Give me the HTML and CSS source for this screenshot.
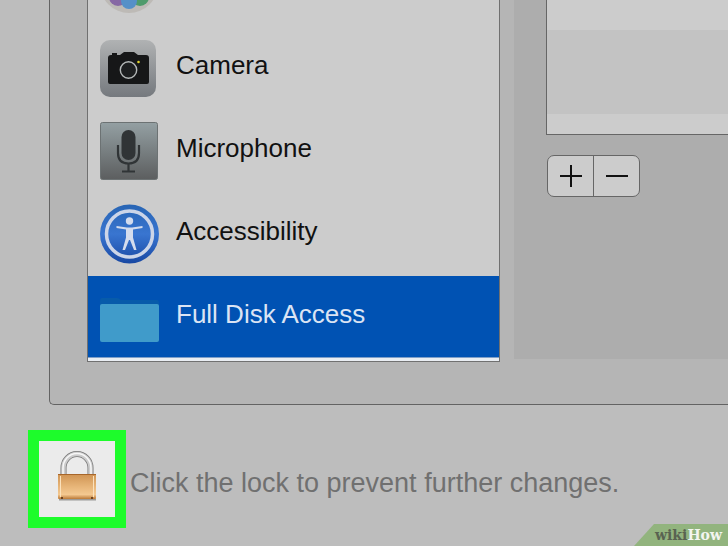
FILE: index.html
```html
<!DOCTYPE html>
<html lang="en">
<head>
<meta charset="utf-8">
<meta name="viewport" content="width=device-width, initial-scale=1">
<title>Security &amp; Privacy</title>
<link rel="stylesheet" href="styles.css">
</head>
<body>
<main class="panel">
  <ul class="services">
    <li class="service service-cut">
      <svg class="icon" viewBox="0 0 60 60" aria-hidden="true">
        <circle cx="29" cy="30" r="29" fill="#bdbab6"/>
        <circle cx="18" cy="43" r="9" fill="#8668a4"/>
        <circle cx="40" cy="43" r="9" fill="#4f9b6c"/>
        <circle cx="29" cy="47" r="8" fill="#5590c8"/>
      </svg>
    </li>
    <li class="service">
      <svg class="icon" viewBox="0 0 60 60" aria-hidden="true">
        <defs><linearGradient id="cam" x2="0" y2="1"><stop stop-color="#b0b2b3"/><stop offset="1" stop-color="#75797e"/></linearGradient></defs>
        <rect x="0" y="2" width="56" height="57" rx="10" fill="url(#cam)"/>
        <path d="M12 17v-2h5v2h3l4-3h10l4 3h8q3 0 3 3v24q0 2-2 2H10q-2 0-2-2V20q0-3 3-3z" fill="#161718"/>
        <circle cx="28.500" cy="32" r="8.200" fill="#1d1f20" stroke="#b4b8b8" stroke-width="1.400"/>
        <circle cx="38.500" cy="24" r="1.300" fill="#e0d32b"/>
      </svg>
      <button class="name" type="button">Camera</button>
    </li>
    <li class="service">
      <svg class="icon" viewBox="0 0 60 60" aria-hidden="true">
        <defs><linearGradient id="mic" x2="0" y2="1"><stop stop-color="#94a0a3"/><stop offset="1" stop-color="#5c5e5f"/></linearGradient></defs>
        <rect x="0.500" y="1.500" width="57" height="57" rx="2" fill="url(#mic)" stroke="#6c7273"/>
        <rect x="21.500" y="9" width="14" height="30" rx="7" fill="#303436"/>
        <path d="M18 24v8q0 10.500 10.500 10.500T39 32v-8M28.500 42.500v8M22 50.500h13" fill="none" stroke="#303436" stroke-width="2.200"/>
      </svg>
      <button class="name" type="button">Microphone</button>
    </li>
    <li class="service">
      <svg class="icon" viewBox="0 0 60 60" aria-hidden="true">
        <defs><linearGradient id="acc" x2="0" y2="1"><stop stop-color="#2865b4"/><stop offset=".5" stop-color="#3975d0"/><stop offset="1" stop-color="#1848a3"/></linearGradient></defs>
        <circle cx="29.500" cy="30" r="29.500" fill="url(#acc)"/>
        <circle cx="29.500" cy="30" r="23" fill="none" stroke="#ccd5e8" stroke-width="3.500"/>
        <circle cx="29.500" cy="17" r="3.700" fill="#d4dced"/>
        <path d="M16.500 22L27 23.500h5L42.500 22v2L33 25.500v8L36.500 46H34L30 36h-1l-4 10h-2.500L26 33.500v-8L16.500 24z" fill="#d4dced"/>
      </svg>
      <button class="name" type="button">Accessibility</button>
    </li>
    <li class="service selected">
      <svg class="icon" viewBox="0 0 60 60" aria-hidden="true">
        <path d="M0 14q0-3 2-3h15q2 0 4 2h36q2 0 2 3v9H0z" fill="#075baa"/>
        <rect x="0" y="17" width="59" height="38" rx="2" fill="#409bca"/>
      </svg>
      <button class="name" type="button" aria-current="true">Full Disk Access</button>
    </li>
  </ul>
  <section class="detail">
    <div class="apps"><div class="app"></div></div>
    <div class="actions">
      <button type="button" aria-label="Add"><svg viewBox="0 0 24 24"><path d="M1 12h22M12 1v22"/></svg></button>
      <button type="button" aria-label="Remove"><svg viewBox="0 0 24 24"><path d="M1 12h22"/></svg></button>
    </div>
  </section>
</main>
<footer class="lockbar">
  <button class="lock" id="lock" type="button" aria-labelledby="lock-text">
    <svg viewBox="0 0 44 52" aria-hidden="true">
      <defs>
        <linearGradient id="brass" x2="0" y2="1"><stop stop-color="#cf9352"/><stop offset=".5" stop-color="#e7b578"/><stop offset=".82" stop-color="#f4c890"/><stop offset="1" stop-color="#bb7936"/></linearGradient>
        <linearGradient id="steel"><stop stop-color="#777"/><stop offset=".25" stop-color="#ddd"/><stop offset=".75" stop-color="#d4d4d4"/><stop offset="1" stop-color="#666"/></linearGradient>
      </defs>
      <path d="M8.500 26V19a13.500 14 0 0 1 27 0v7" fill="none" stroke="#777" stroke-width="6"/>
      <path d="M8.500 26V19a13.500 14 0 0 1 27 0v7" fill="none" stroke="#ccc" stroke-width="4.500"/>
      <path d="M8 26V19a14 14.500 0 0 1 28 0v7" fill="none" stroke="#f7f7f7" stroke-width="1.500"/>
      <path d="M4 50.500h37" stroke="#9c9b99" stroke-width="2"/>
      <rect x="3" y="25" width="38" height="25" rx="1" fill="url(#brass)"/>
      <path d="M5.500 27v21M38.500 27v21" stroke="#fbe1bb"/>
      <path d="M3 25.500h38" stroke="#a7662a"/>
      <path d="M7 48v2M37 48v2" stroke="#70431d" stroke-width="2"/>
    </svg>
  </button>
  <label class="lock-text" id="lock-text" for="lock">Click the lock to prevent further changes.</label>
</footer>
<div class="brand"><span class="wiki">wiki</span><span>How</span></div>
</body>
</html>
```
FILE: styles.css
```css
* {
  box-sizing: border-box;
}

body {
  margin: 0;
  min-height: 100vh;
  overflow: hidden;
  background: #bdbdbd;
  color: #111;
  font-family: "Liberation Sans", Arial, sans-serif;
}

button {
  margin: 0;
  padding: 0;
  border: 0;
  background: none;
  color: inherit;
  font: inherit;
}

.panel {
  display: flex;
  gap: 14px;
  margin-left: 49px;
  padding: 0 0 42px 37px;
  border: solid #636363;
  border-width: 0 0 1px 1px;
  border-bottom-left-radius: 5px;
  background: #b5b5b5;
}

.services {
  flex: 0 0 413px;
  display: grid;
  gap: 2px;
  margin: 0;
  padding: 0 0 4px;
  list-style: none;
  border: solid #707070;
  border-width: 0 1px 1px;
  background: #ccc;
}

.service {
  display: flex;
  align-items: center;
  gap: 16px;
  height: 81px;
  padding-left: 12px;
}

.service-cut {
  height: 25px;
  align-items: flex-end;
  padding-bottom: 11px;
  overflow: hidden;
}

.icon {
  flex: none;
  width: 60px;
  height: 60px;
}

.name {
  padding-bottom: 6px;
  font-size: 26px;
  line-height: 32px;
}

.selected {
  background: #0052b3;
  color: #dbe4f4;
  box-shadow: 0 1px #7f9fc8, 0 4px #e9edf2;
}

.detail {
  flex: 1;
  margin-bottom: 3px;
  padding-left: 32px;
  background: #adadad;
}

.apps {
  height: 135px;
  padding-top: 30px;
  border: solid #666;
  border-width: 0 0 1px 1px;
  background: #ccc;
}

.app {
  height: 84px;
  background: #c3c3c3;
}

.actions {
  display: inline-flex;
  margin: 20px 0 0 1px;
  border: 1px solid #666;
  border-radius: 7px;
  background: #ccc;
}

.actions button {
  display: grid;
  place-items: center;
  width: 45px;
  height: 40px;
}

.actions button + button {
  width: 46px;
  border-left: 1px solid #666;
}

.actions svg {
  width: 24px;
  height: 24px;
  stroke: #111;
  stroke-width: 2;
}

.lockbar {
  display: flex;
  align-items: center;
  gap: 4px;
  padding: 25px 0 0 28px;
}

.lock {
  display: grid;
  justify-items: center;
  align-items: start;
  width: 98px;
  height: 98px;
  padding-top: 8px;
  border: 11px solid #1dfc2b;
  background: #ebebeb;
}

.lock svg {
  width: 44px;
  height: 52px;
}

.lock-text {
  padding-top: 8px;
  color: #707070;
  font-size: 27px;
  line-height: 32px;
}

.brand {
  position: fixed;
  right: 0;
  bottom: 0;
  width: 94px;
  height: 22px;
  padding-left: 21px;
  background: #92b47e;
  clip-path: polygon(20px 0, 100% 0, 100% 100%, 0 100%);
  color: #f3f5f0;
  font: bold 14px/22px "DejaVu Serif", serif;
}

.wiki {
  color: #596351;
}
```
